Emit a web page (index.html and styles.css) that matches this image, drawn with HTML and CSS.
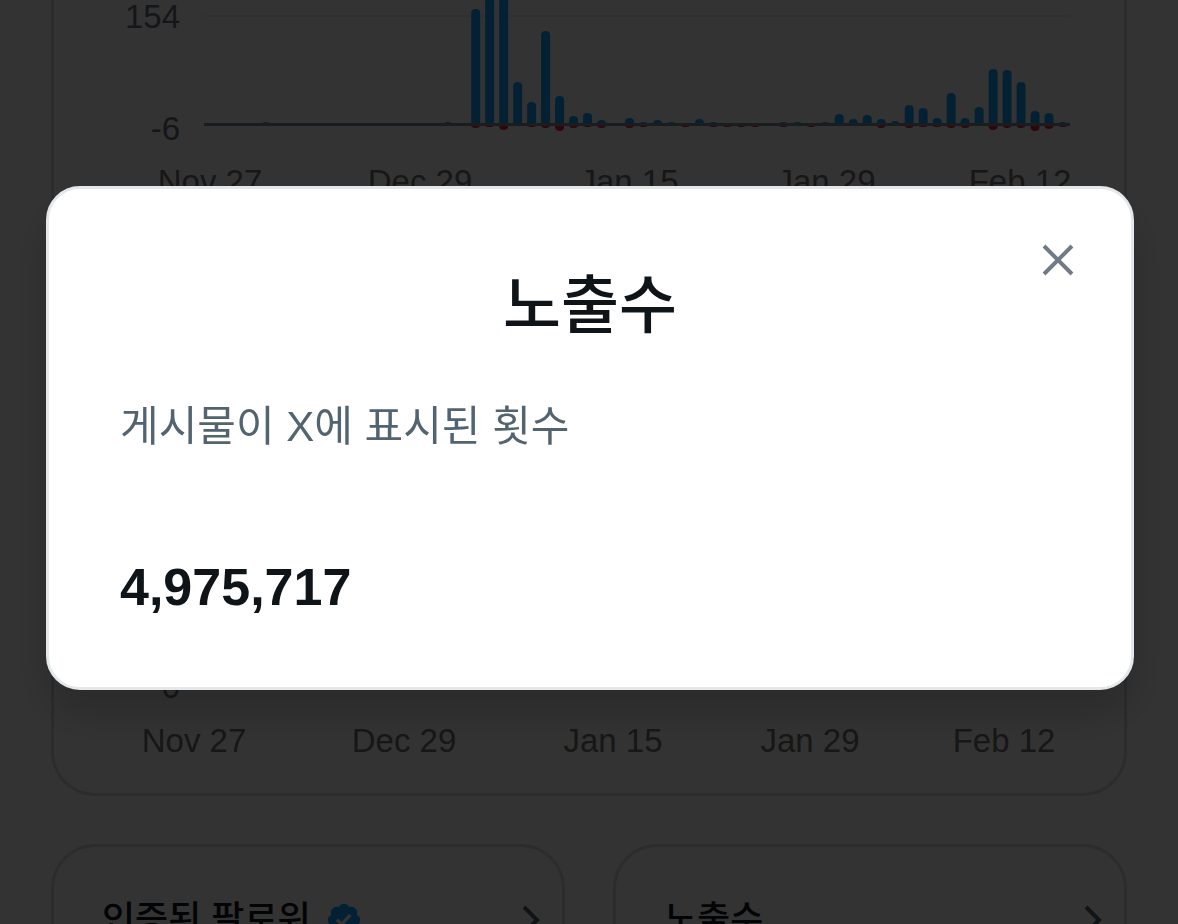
FILE: index.html
```html
<!DOCTYPE html>
<html lang="ko">
<head>
<meta charset="utf-8">
<meta name="viewport" content="width=device-width, initial-scale=1">
<title>노출수</title>
<link rel="stylesheet" href="styles.css">
</head>
<body>
<main class="dashboard">
  <section class="card charts">
    <div class="chart">
      <div class="scale"><span>154</span><span>-6</span></div>
      <svg class="plot" id="followers" viewBox="0 0 868 140" aria-hidden="true"></svg>
    </div>
    <div class="dates dates-first"><span>Nov 27</span><span>Dec 29</span><span>Jan 15</span><span>Jan 29</span><span>Feb 12</span></div>
    <div class="zero">0</div>
    <div class="dates dates-second"><span>Nov 27</span><span>Dec 29</span><span>Jan 15</span><span>Jan 29</span><span>Feb 12</span></div>
  </section>
  <div class="tiles">
    <a class="card tile" href="#">
      <span class="tile-name">인증된 팔로워</span>
      <svg class="badge" viewBox="0 0 22 22" aria-hidden="true"><path fill="currentColor" d="M20.396 11c-.018-.646-.215-1.275-.57-1.816-.354-.54-.852-.972-1.438-1.246.223-.607.27-1.264.14-1.897-.131-.634-.437-1.218-.882-1.687-.47-.445-1.053-.75-1.687-.882-.633-.13-1.29-.083-1.897.14-.273-.587-.704-1.086-1.245-1.44S11.647 1.62 11 1.604c-.646.017-1.273.213-1.813.568s-.969.854-1.24 1.44c-.608-.223-1.267-.272-1.902-.14-.635.13-1.22.436-1.69.882-.445.47-.749 1.055-.878 1.688-.13.633-.08 1.29.144 1.896-.587.274-1.087.705-1.443 1.245-.356.54-.555 1.17-.574 1.817.02.647.218 1.276.574 1.817.356.54.856.972 1.443 1.245-.224.606-.274 1.263-.144 1.896.13.634.433 1.218.877 1.688.47.443 1.054.747 1.687.878.633.132 1.29.084 1.897-.136.274.586.705 1.084 1.246 1.439.54.354 1.17.551 1.816.569.647-.016 1.276-.213 1.817-.567s.972-.854 1.245-1.44c.604.239 1.266.296 1.903.164.636-.132 1.22-.447 1.68-.907.46-.46.776-1.044.908-1.681s.075-1.299-.165-1.903c.586-.274 1.084-.705 1.439-1.246.354-.54.551-1.17.569-1.816zM9.662 14.85l-3.429-3.428 1.293-1.302 2.072 2.072 4.4-4.794 1.347 1.246z"/></svg>
      <svg class="chevron" viewBox="0 0 18 30" aria-hidden="true"><path d="M2 2l13 13L2 28"/></svg>
    </a>
    <a class="card tile" href="#">
      <span class="tile-name">노출수</span>
      <svg class="chevron" viewBox="0 0 18 30" aria-hidden="true"><path d="M2 2l13 13L2 28"/></svg>
    </a>
  </div>
</main>
<div class="overlay">
  <div class="modal" role="dialog" aria-modal="true" aria-labelledby="modal-title">
    <button class="close" type="button" aria-label="닫기"><svg viewBox="0 0 32 32" aria-hidden="true"><path d="M2 2l28 28M30 2L2 30"/></svg></button>
    <h1 class="title" id="modal-title">노출수</h1>
    <p class="description">게시물이 X에 표시된 횟수</p>
    <p class="total">4,975,717</p>
  </div>
</div>
<script src="chart.js"></script>
</body>
</html>
```

FILE: styles.css
```css
* { box-sizing: border-box; }

body {
  margin: 0;
  height: 100vh;
  overflow: hidden;
  background: #fff;
  color: #0f1419;
  font-family: "Liberation Sans", "Noto Sans CJK KR", sans-serif;
}

.dashboard { padding: 0 51px; }

.card {
  border: 3px solid #cfd9de;
  border-radius: 44px;
}

.charts {
  border-top: 0;
  border-radius: 0 0 44px 44px;
  padding: 0 53px 32px 51px;
}

.chart {
  display: flex;
  gap: 24px;
}

.scale {
  width: 75px;
  flex: none;
  display: flex;
  flex-direction: column;
  justify-content: space-between;
  height: 146px;
  text-align: right;
  font-size: 33px;
  line-height: 34px;
  color: #66717d;
}

.plot {
  flex: 1;
  min-width: 0;
  height: 140px;
}

.grid { stroke: #e9eef2; stroke-width: 2; }
.axis { stroke: #7f8f9c; stroke-width: 3; }
.gain { fill: #17a0ff; }
.loss { fill: #f4212e; }

.dates {
  display: grid;
  grid-template-columns: 210fr 210fr 208fr 186fr 202fr;
  text-align: center;
  font-size: 33px;
  line-height: 40px;
  color: #737373;
}

.dates-first { margin-top: 16px; margin-right: -50px; }
.dates-second { margin-top: 16px; margin-left: -16px; margin-right: -34px; }

.zero {
  width: 75px;
  margin-top: 467px;
  text-align: right;
  font-size: 33px;
  line-height: 36px;
  color: #66717d;
}

.tiles {
  display: grid;
  grid-template-columns: 1fr 1fr;
  gap: 48px;
  margin-top: 48px;
}

.tile {
  display: flex;
  align-items: center;
  height: 300px;
  padding: 52px 22px 200px 48px;
  color: inherit;
  text-decoration: none;
}

.tile-name {
  font-size: 36px;
  line-height: 48px;
  font-weight: 500;
}

.badge {
  width: 38px;
  height: 38px;
  margin-left: 14px;
  color: #17a0ff;
}

.chevron {
  width: 18px;
  height: 30px;
  margin-left: auto;
  fill: none;
  stroke: #536471;
  stroke-width: 4;
}

.overlay {
  position: fixed;
  inset: 0;
  padding: 186px 44px 0 46px;
  background: rgba(0, 0, 0, 0.8);
}

.modal {
  position: relative;
  padding: 74px 71px 68px;
  border: 3px solid #e5e8eb;
  border-radius: 34px;
  background: #fff;
  box-shadow: 0 24px 40px rgba(0, 8, 6, 0.18);
}

.close {
  position: absolute;
  top: 55px;
  right: 57px;
  width: 32px;
  height: 32px;
  padding: 0;
  border: 0;
  background: none;
}

.close svg {
  display: block;
  width: 32px;
  height: 32px;
  fill: none;
  stroke: #717b87;
  stroke-width: 4;
}

.title {
  margin: 0;
  text-align: center;
  font-size: 63px;
  line-height: 84px;
  font-weight: 500;
}

.description {
  margin: 48px 0 0;
  font-size: 42px;
  line-height: 64px;
  color: #536471;
}

.total {
  margin: 96px 0 0;
  font-size: 52px;
  line-height: 64px;
  font-weight: 700;
}
```

FILE: chart.js
```js
// One entry per day: [position, top of gain, bottom of loss]; the baseline is at 125.
const days = [
  [62, 122, 0], [244, 122, 0],
  [272, 9, 128], [286, -20, 127], [300, -20, 130], [314, 82, 0], [328, 102, 127],
  [342, 31, 128], [356, 96, 131], [370, 116, 128], [384, 113, 127], [398, 120, 128],
  [426, 118, 128], [440, 122, 127], [454, 120, 0], [468, 122, 0], [482, 123, 127],
  [496, 119, 0], [510, 122, 127], [524, 123, 127], [538, 123, 127], [552, 123, 127],
  [580, 122, 127], [594, 122, 0], [608, 123, 127], [622, 122, 0],
  [636, 114, 0], [650, 119, 0], [664, 115, 0], [678, 119, 128], [692, 121, 0],
  [706, 105, 128], [720, 108, 127], [734, 118, 127], [748, 93, 128], [762, 118, 128],
  [776, 107, 0], [790, 69, 130], [804, 70, 128], [818, 82, 128], [832, 111, 131],
  [846, 113, 129], [860, 122, 127]
];
const base = 125;

function cap(x, edge) {
  const h = Math.abs(base - edge);
  const r = Math.min(4, h);
  const inner = edge < base ? edge + r : edge - r;
  return `M${x - 4.5} ${base}V${inner}Q${x - 4.5} ${edge} ${x} ${edge}Q${x + 4.5} ${edge} ${x + 4.5} ${inner}V${base}Z`;
}

let marks = '<path class="grid" d="M0 16H867"/>';
for (const [x, top, bottom] of days) {
  marks += `<path class="gain" d="${cap(x, top)}"/>`;
  if (bottom) marks += `<path class="loss" d="${cap(x, bottom)}"/>`;
}
marks += '<path class="axis" d="M0 124.5H867"/>';
document.getElementById('followers').innerHTML = marks;
```
